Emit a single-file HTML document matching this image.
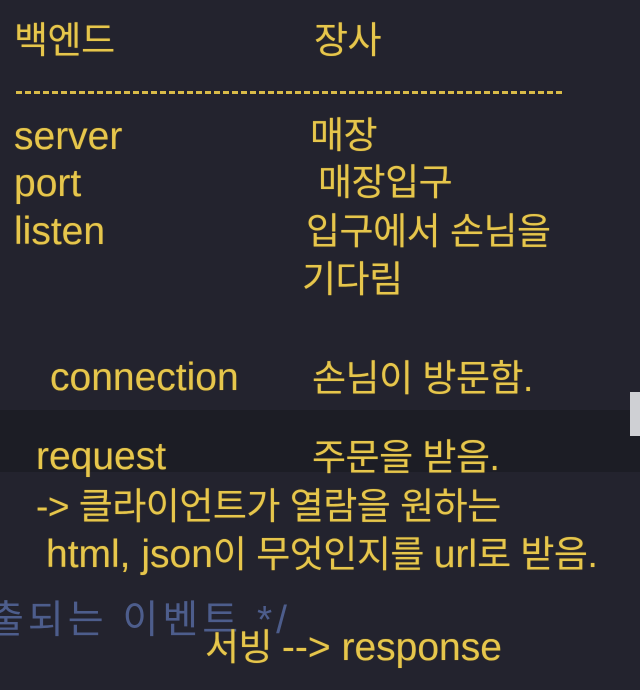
<!DOCTYPE html>
<html><head><meta charset="utf-8"><style>
html,body{margin:0;padding:0}
body{width:640px;height:690px;background:#23232e;position:relative;overflow:hidden;font-family:"Liberation Sans","Noto Sans CJK KR",sans-serif;color:#e6c64c;font-size:37px;}
.t{position:absolute;line-height:37px;white-space:nowrap;text-shadow:0 0 1px #8a7020;letter-spacing:-0.5px}
.l{font-size:39px;letter-spacing:0}
.band{position:absolute;left:0;top:410px;width:640px;height:62px;background:#1c1d25}
.blue{color:#4d5d8c;text-shadow:none}
</style></head><body>
<div class="band"></div>
<div style="position:absolute;left:630px;top:392px;width:10px;height:44px;background:#cfd0d4"></div>
<div class="t" style="left:14px;top:22px">백엔드</div>
<div class="t" style="left:314px;top:22px">장사</div>
<div style="position:absolute;left:16px;top:91px;width:546px;border-top:3px dashed #d8bb48"></div>
<div class="t l" style="left:14px;top:118px">server</div>
<div class="t" style="left:310px;top:117px">매장</div>
<div class="t l" style="left:14px;top:165px">port</div>
<div class="t" style="left:318px;top:164px">매장입구</div>
<div class="t l" style="left:14px;top:213px">listen</div>
<div class="t" style="left:306px;top:213px">입구에서 손님을</div>
<div class="t" style="left:302px;top:261px">기다림</div>
<div class="t l" style="left:50px;top:359px">connection</div>
<div class="t" style="left:312px;top:360px">손님이 방문함.</div>
<div class="t l" style="left:36px;top:438px">request</div>
<div class="t" style="left:312px;top:439px">주문을 받음.</div>
<div class="t" style="left:36px;top:488px">-&gt; 클라이언트가 열람을 원하는</div>
<div class="t" style="left:46px;top:536px"><span class="l">html, json</span>이 무엇인지를 <span class="l">url</span>로 받음.</div>
<div class="t blue" style="left:-12px;top:602px;font-size:39px;letter-spacing:4px">출되는 이벤트 */</div>
<div class="t" style="left:205px;top:629px">서빙 <span class="l">--&gt; response</span></div>
</body></html>
